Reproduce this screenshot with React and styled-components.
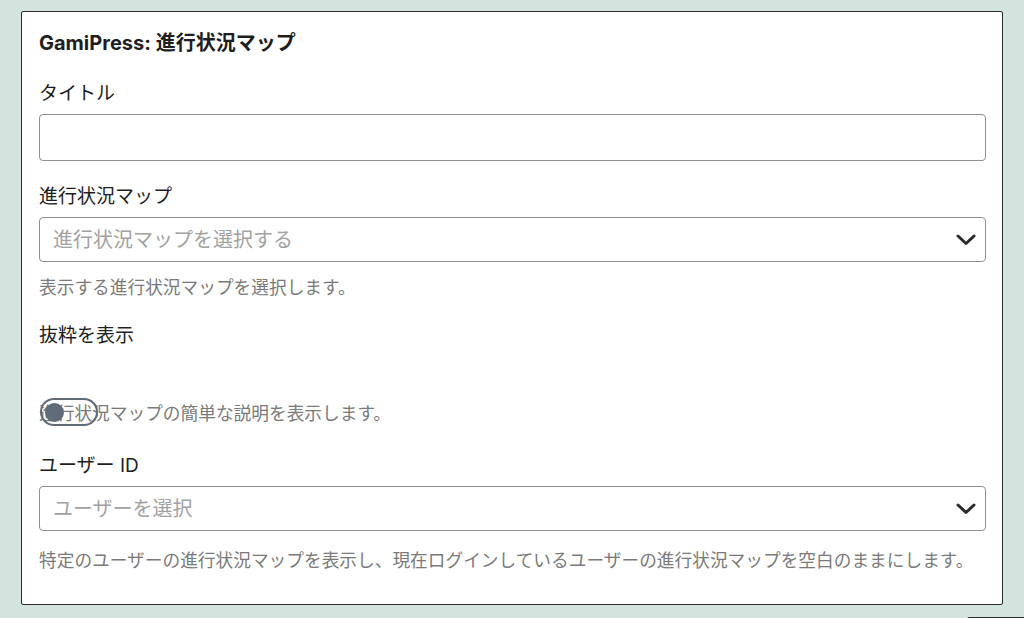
import React from "react";
import styled, { createGlobalStyle } from "styled-components";

const Global = createGlobalStyle`
  html, body { margin: 0; padding: 0; }
  body {
    background: #d3e3dd;
    overflow: hidden;
    font-family: "Inter", "Noto Sans CJK JP", sans-serif;
    color: #1e1e1e;
  }
`;

const Page = styled.div`
  padding: 11px 21px 0 21px;
  width: 1024px;
  box-sizing: border-box;
`;

const Card = styled.section`
  background: #fff;
  border: 1px solid #2c2c2c;
  border-radius: 2px;
  padding: 17px 16px 31px 17px;
  box-sizing: border-box;
`;

const Title = styled.h2`
  margin: 0;
  font-size: 20px;
  line-height: 28px;
  font-weight: 700;
  color: #1e1e1e;
`;

const Field = styled.div`
  margin-top: ${(p) => p.$gap}px;
  display: flex;
  flex-direction: column;
`;

const Label = styled.label`
  font-size: 19px;
  line-height: 26px;
  color: #1e1e1e;
  margin-bottom: ${(p) => p.$after ?? 7}px;
`;

const TextInput = styled.input`
  height: 47px;
  box-sizing: border-box;
  border: 1px solid #8c8f94;
  border-radius: 4px;
  padding: 0 13px;
  font-size: 20px;
  font-family: inherit;
  background: #fff;
  outline: none;
`;

const SelectBox = styled.div`
  height: 45px;
  box-sizing: border-box;
  border: 1px solid #8c8f94;
  border-radius: 4px;
  padding: 0 9px 0 13px;
  display: flex;
  align-items: center;
  justify-content: space-between;
  background: #fff;
`;

const Placeholder = styled.span`
  font-size: 20px;
  line-height: 26px;
  color: #a2a2a2;
`;

const Help = styled.p`
  position: relative;
  margin: ${(p) => p.$top}px 0 0 0;
  font-size: 17.7px;
  line-height: 24px;
  color: #7a7a7a;
`;

const Toggle = styled.span`
  position: absolute;
  left: 1px;
  top: -4px;
  width: 58px;
  height: 28px;
  box-sizing: border-box;
  border: 2.5px solid #5f6b78;
  border-radius: 14px;
  display: flex;
  align-items: center;
  padding-left: 3px;
`;

const Knob = styled.span`
  width: 19px;
  height: 19px;
  border-radius: 50%;
  background: #5f6b78;
`;

const Footer = styled.div`
  display: flex;
  justify-content: flex-end;
  margin-top: 12px;
`;

const CornerBox = styled.div`
  width: 60px;
  height: 20px;
  margin-right: -26px;
  border: 1px solid #2c2c2c;
  border-radius: 2px;
  background: #fff;
`;

const Chevron = () => (
  <svg width="20" height="12" viewBox="0 0 20 12" fill="none">
    <path d="M2 2 L10 9.5 L18 2" stroke="#2a2a2a" strokeWidth="3" strokeLinecap="round" strokeLinejoin="round" />
  </svg>
);

export default function App() {
  return (
    <Page>
      <Global />
      <Card>
        <Title>GamiPress: 進行状況マップ</Title>

        <Field $gap={24}>
          <Label>タイトル</Label>
          <TextInput type="text" />
        </Field>

        <Field $gap={23}>
          <Label>進行状況マップ</Label>
          <SelectBox>
            <Placeholder>進行状況マップを選択する</Placeholder>
            <Chevron />
          </SelectBox>
          <Help $top={14}>表示する進行状況マップを選択します。</Help>
        </Field>

        <Field $gap={23}>
          <Label $after={0}>抜粋を表示</Label>
          <Help $top={53}>
            進行状況マップの簡単な説明を表示します。
            <Toggle>
              <Knob />
            </Toggle>
          </Help>
        </Field>

        <Field $gap={27}>
          <Label $after={7}>ユーザー ID</Label>
          <SelectBox>
            <Placeholder>ユーザーを選択</Placeholder>
            <Chevron />
          </SelectBox>
          <Help $top={18}>
            特定のユーザーの進行状況マップを表示し、現在ログインしているユーザーの進行状況マップを空白のままにします。
          </Help>
        </Field>
      </Card>
      <Footer>
        <CornerBox />
      </Footer>
    </Page>
  );
}
